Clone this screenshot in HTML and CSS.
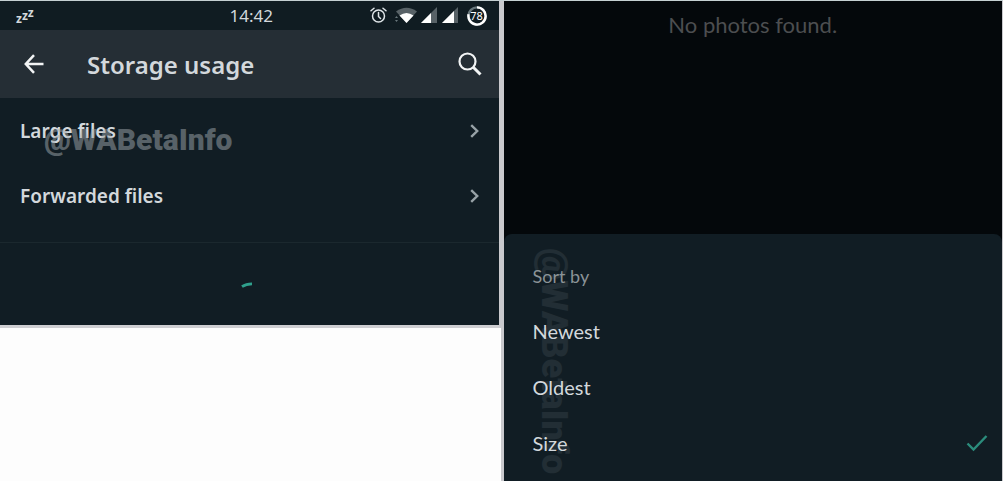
FILE: index.html
```html
<!DOCTYPE html>
<html lang="en">
<head>
  <meta charset="UTF-8" />
  <meta name="viewport" content="width=device-width, initial-scale=1.0"/>
  <title>Storage usage</title>
  <link rel="stylesheet" href="styles.css">
</head>
<body>
  <div class="left">
    <main class="storage">
      <div class="statusbar">
        <span class="zzz"><b>z</b><b>z</b><b>z</b></span>
        <time class="clock">14:42</time>
        <div class="status-icons">
          <svg width="17" height="17" viewBox="0 0 17 17" fill="none" stroke="#dfe5e8" stroke-width="1.5" stroke-linecap="round">
            <circle cx="8.500" cy="9" r="6"/>
            <path d="M8.500 5.500v4l2 2M1 3.800L4 1.200M16 3.800L13 1.200"/>
          </svg>
          <svg class="wifi" width="22" height="17" viewBox="0 0 22 17">
            <path d="M1 4.500Q11.500 -3 22 4.500L11.500 16z" fill="#586267"/>
            <path d="M4.500 8.500Q11.500 3.500 18.500 8.500L11.500 16z" fill="#fff"/>
            <path d="M0 11l1.500-2 1.500 2zM0 13l1.500 2 1.500-2z" fill="#68777c"/>
          </svg>
          <svg width="17" height="17" viewBox="0 0 17 17">
            <path d="M0 16L16 0v16z" fill="#586267"/>
            <path d="M0 16L10 6v10z" fill="#fff"/>
          </svg>
          <svg width="17" height="17" viewBox="0 0 17 17">
            <path d="M0 16L16 0v16z" fill="#586267"/>
            <path d="M0 16L12 4v12z" fill="#fff"/>
          </svg>
          <span class="battery">
            <svg width="20" height="20" viewBox="0 0 20 20" fill="none" stroke-width="2.400">
              <circle cx="10" cy="10" r="8.600" stroke="#68777c"/>
              <path d="M10 1.400A8.600 8.600 0 1 1 1.600 8.300" stroke="#fff"/>
            </svg>
            <span class="battery-level">78</span>
          </span>
        </div>
      </div>

      <header class="appbar">
        <button type="button" aria-label="Back">
          <svg width="20" height="20" viewBox="0 0 20 20" fill="none" stroke="#f2f4f5" stroke-width="2.500">
            <path d="M19.500 10H1.800M10 1.200L1.800 10l8.200 8.800"/>
          </svg>
        </button>
        <h1>Storage usage</h1>
        <button type="button" aria-label="Search">
          <svg width="24" height="24" viewBox="0 0 24 24" fill="none" stroke="#f2f4f5">
            <circle cx="9.500" cy="9.500" r="8" stroke-width="2.200"/>
            <path d="M15 15l7.500 7.500" stroke-width="3"/>
          </svg>
        </button>
      </header>

      <nav class="files">
        <a href="#large">Large files
          <svg width="9" height="14" viewBox="0 0 9 14"><path d="M1.200 1.200L7.200 7l-6 5.800"/></svg>
        </a>
        <a href="#forwarded">Forwarded files
          <svg width="9" height="14" viewBox="0 0 9 14"><path d="M1.200 1.200L7.200 7l-6 5.800"/></svg>
        </a>
        <span class="watermark">@WABetaInfo</span>
      </nav>

      <div class="loading">
        <svg width="12" height="6" viewBox="0 0 12 6" fill="none" stroke="#2fa08c" stroke-width="2.800">
          <path d="M1 4.600Q5 1.800 11 1.800"/>
        </svg>
      </div>
    </main>
  </div>

  <section class="photos">
    <p class="empty">No photos found.</p>
    <form class="sheet">
      <span class="watermark vertical">@WABetaInfo</span>
      <fieldset>
        <legend>Sort by</legend>
        <label><input type="radio" name="sort" value="newest">Newest
          <svg width="22" height="18" viewBox="0 0 22 18"><path d="M1.500 9.500l6 6L20.500 2"/></svg>
        </label>
        <label><input type="radio" name="sort" value="oldest">Oldest
          <svg width="22" height="18" viewBox="0 0 22 18"><path d="M1.500 9.500l6 6L20.500 2"/></svg>
        </label>
        <label><input type="radio" name="sort" value="size" checked>Size
          <svg width="22" height="18" viewBox="0 0 22 18"><path d="M1.500 9.500l6 6L20.500 2"/></svg>
        </label>
      </fieldset>
    </form>
  </section>
</body>
</html>
```
FILE: styles.css
```css
* {
  box-sizing: border-box;
}
body {
  margin: 0;
  min-height: 100vh;
  display: grid;
  grid-template-columns: 1fr 1fr;
  border-top: 1px solid #c5d0d2;
  background: #fdfdfd;
  color: #d3d8dc;
  font-family: "Noto Sans", sans-serif;
}
button {
  display: flex;
  padding: 0;
  border: 0;
  background: none;
}
.left {
  border-right: 1px solid #c9c9cd;
}
.storage {
  background: #111d24;
  border-right: 2px solid #c9c9cd;
  border-bottom: 3px solid #ceced2;
}
.statusbar {
  display: grid;
  grid-template-columns: 1fr auto 1fr;
  align-items: center;
  height: 29px;
  padding: 0 12px 0 16px;
  background: #101c22;
}
.zzz {
  display: flex;
  align-items: flex-end;
  font-size: 12px;
  line-height: 12px;
}
.zzz b:nth-child(2) {
  padding-bottom: 3px;
}
.zzz b:nth-child(3) {
  padding-bottom: 6px;
}
.clock {
  font-size: 17px;
  line-height: 20px;
}
.status-icons {
  display: flex;
  justify-content: flex-end;
  align-items: center;
  gap: 4px;
}
.wifi {
  margin-left: 4px;
}
.battery {
  display: grid;
  place-items: center;
  margin-left: 4px;
}
.battery > * {
  grid-area: 1 / 1;
}
.battery-level {
  font-size: 11px;
  line-height: 12px;
  color: #fff;
}
.appbar {
  display: flex;
  align-items: center;
  height: 68px;
  padding: 0 17px 0 24px;
  background: #252e35;
}
h1 {
  flex: 1;
  margin: 0 0 0 43px;
  font-size: 24px;
  font-weight: 600;
}
.files {
  position: relative;
  padding: 0 20px 14px;
  border-bottom: 1px solid #1b282e;
}
.files a {
  display: flex;
  align-items: center;
  justify-content: space-between;
  height: 65px;
  color: #d3d8dc;
  font-size: 19px;
  font-weight: 600;
  text-decoration: none;
}
.files path {
  fill: none;
  stroke: #98a2a7;
  stroke-width: 2.4;
}
.watermark {
  position: absolute;
  left: 44px;
  top: 22px;
  color: rgba(160, 168, 172, 0.5);
  font-family: Roboto, "Liberation Sans", sans-serif;
  font-size: 30px;
  font-weight: 900;
  line-height: 40px;
  pointer-events: none;
}
.loading {
  display: flex;
  justify-content: center;
  height: 82px;
  padding: 39px 4px 0 0;
}
.photos {
  display: flex;
  flex-direction: column;
  justify-content: space-between;
  background: #04080b;
  border-left: 2px solid #c9c9cd;
  border-right: 1px solid #c9c9cd;
  font-family: Lato, "Noto Sans", sans-serif;
}
.empty {
  margin: 8px 0 0;
  color: #4c4e50;
  font-size: 22px;
  line-height: 32px;
  text-align: center;
}
.sheet {
  position: relative;
  padding: 28px 14px 10px 29px;
  background: #111d24;
  border-radius: 8px 8px 0 0;
}
.vertical {
  left: 30px;
  top: 14px;
  color: #222e35;
  font-size: 36px;
  writing-mode: vertical-rl;
}
fieldset {
  position: relative;
  margin: 0;
  padding: 0;
  border: 0;
}
legend {
  padding: 0 0 13px;
  color: #8b9397;
  font-size: 18px;
  line-height: 28px;
}
label {
  display: flex;
  align-items: center;
  justify-content: space-between;
  height: 56px;
  font-size: 20px;
}
label input {
  position: absolute;
  opacity: 0;
}
label svg {
  display: none;
  fill: none;
  stroke: #2b8c7c;
  stroke-width: 2.4;
}
input:checked ~ svg {
  display: block;
}
```
